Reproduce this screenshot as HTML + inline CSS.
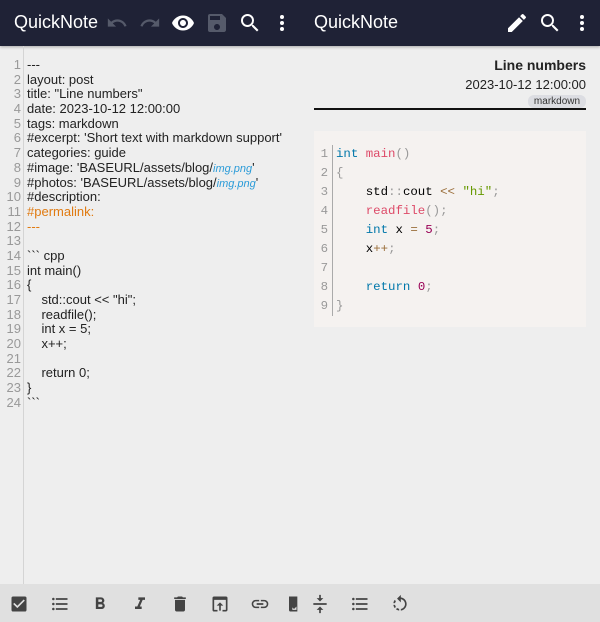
<!DOCTYPE html>
<html><head><meta charset="utf-8"><style>
*{margin:0;padding:0;box-sizing:border-box}
body{width:600px;height:622px;overflow:hidden;background:#eeeeee;font-family:"Liberation Sans",sans-serif;position:relative}
.hdr{position:absolute;left:0;top:0;width:600px;height:46px;background:#1f2236;box-shadow:0 1px 3px rgba(0,0,0,.3)}
.t{position:absolute;top:12px;color:#fff;font-size:18px}
.ic{position:absolute;top:11px}
.gut{position:absolute;left:0;top:46px;width:24px;height:538px;border-right:1px solid #d4d4d4}
.ed{position:absolute;left:0;top:58px;font-size:13px;line-height:14.7px;color:#222}
.ed div{white-space:pre;height:14.7px}
.ed span.n{display:inline-block;width:21px;text-align:right;color:#999;margin-right:6px}
.or{color:#e07b12}.bl{color:#2a9bd8;font-style:italic;font-size:11px}
.pv{position:absolute;left:314px;width:272px;text-align:right;color:#222}
.code{position:absolute;left:314px;top:131px;width:272px;height:196px;background:#f5f2f0;font-family:"Liberation Mono",monospace;font-size:12.4px}
.code div{position:absolute;left:0;white-space:pre;height:19px;line-height:19px}
.ln{display:inline-block;width:19px;text-align:right;color:#999;padding-right:4px;border-right:1px solid #aaa;margin-right:3px}
.k{color:#07a}.f{color:#dd4a68}.s{color:#690}.nu{color:#905}.p{color:#999}.o{color:#9a6e3a}
.bot{position:absolute;left:0;top:584px;width:600px;height:38px;background:#e0e0e0}
.bot svg{position:absolute;top:10px}
</style></head><body>
<div class="hdr">
<div class="t" style="left:14px">QuickNote</div>
<div class="t" style="left:314px">QuickNote</div>
<svg class="ic" style="left:106px" width="22" height="24" viewBox="0 0 24 24"><path fill="#555a6a" d="M12.5 8c-2.65 0-5.05 1-6.9 2.6L2 7v9h9l-3.62-3.62c1.39-1.16 3.16-1.88 5.12-1.88 3.54 0 6.55 2.31 7.6 5.5l2.37-.78C21.08 11.03 17.15 8 12.5 8z"/></svg>
<svg class="ic" style="left:139px" width="22" height="24" viewBox="0 0 24 24"><path fill="#555a6a" d="M18.4 10.6C16.55 9 14.15 8 11.5 8c-4.65 0-8.58 3.03-9.96 7.22L3.9 16c1.05-3.19 4.05-5.5 7.6-5.5 1.95 0 3.73.72 5.12 1.88L13 16h9V7l-3.6 3.6z"/></svg>
<svg class="ic" style="left:171px" width="24" height="24" viewBox="0 0 24 24"><path fill="#fff" d="M12 4.5C7 4.5 2.73 7.61 1 12c1.73 4.39 6 7.5 11 7.5s9.27-3.11 11-7.5c-1.73-4.39-6-7.5-11-7.5zM12 17c-2.76 0-5-2.24-5-5s2.24-5 5-5 5 2.24 5 5-2.24 5-5 5zm0-8c-1.66 0-3 1.34-3 3s1.34 3 3 3 3-1.34 3-3-1.34-3-3-3z"/></svg>
<svg class="ic" style="left:205px" width="24" height="24" viewBox="0 0 24 24"><path fill="#555a6a" d="M17 3H5a2 2 0 0 0-2 2v14a2 2 0 0 0 2 2h14c1.1 0 2-.9 2-2V7l-4-4zm-5 16c-1.66 0-3-1.34-3-3s1.34-3 3-3 3 1.34 3 3-1.34 3-3 3zm3-10H5V5h10v4z"/></svg>
<svg class="ic" style="left:238px" width="24" height="24" viewBox="0 0 24 24"><path fill="#fff" d="M15.5 14h-.79l-.28-.27A6.47 6.47 0 0 0 16 9.5 6.5 6.5 0 1 0 9.5 16c1.61 0 3.09-.59 4.23-1.57l.27.28v.79l5 4.99L20.49 19l-4.99-5zm-6 0C7.01 14 5 11.99 5 9.5S7.01 5 9.5 5 14 7.01 14 9.5 11.99 14 9.5 14z"/></svg>
<svg class="ic" style="left:270px" width="24" height="24" viewBox="0 0 24 24"><path fill="#fff" d="M12 8a2 2 0 1 0 0-4 2 2 0 0 0 0 4zm0 2a2 2 0 1 0 0 4 2 2 0 0 0 0-4zm0 6a2 2 0 1 0 0 4 2 2 0 0 0 0-4z"/></svg>
<svg class="ic" style="left:505px" width="24" height="24" viewBox="0 0 24 24"><path fill="#fff" d="M3 17.25V21h3.75L17.81 9.94l-3.75-3.75L3 17.25zM20.71 7.04a1 1 0 0 0 0-1.41l-2.34-2.34a1 1 0 0 0-1.41 0l-1.83 1.83 3.75 3.75 1.83-1.83z"/></svg>
<svg class="ic" style="left:538px" width="24" height="24" viewBox="0 0 24 24"><path fill="#fff" d="M15.5 14h-.79l-.28-.27A6.47 6.47 0 0 0 16 9.5 6.5 6.5 0 1 0 9.5 16c1.61 0 3.09-.59 4.23-1.57l.27.28v.79l5 4.99L20.49 19l-4.99-5zm-6 0C7.01 14 5 11.99 5 9.5S7.01 5 9.5 5 14 7.01 14 9.5 11.99 14 9.5 14z"/></svg>
<svg class="ic" style="left:570px" width="24" height="24" viewBox="0 0 24 24"><path fill="#fff" d="M12 8a2 2 0 1 0 0-4 2 2 0 0 0 0 4zm0 2a2 2 0 1 0 0 4 2 2 0 0 0 0-4zm0 6a2 2 0 1 0 0 4 2 2 0 0 0 0-4z"/></svg>
</div>
<div class="gut"></div>
<div class="ed">
<div><span class="n">1</span>---</div>
<div><span class="n">2</span>layout: post</div>
<div><span class="n">3</span>title: "Line numbers"</div>
<div><span class="n">4</span>date: 2023-10-12 12:00:00</div>
<div><span class="n">5</span>tags: markdown</div>
<div><span class="n">6</span>#excerpt: 'Short text with markdown support'</div>
<div><span class="n">7</span>categories: guide</div>
<div><span class="n">8</span>#image: 'BASEURL/assets/blog/<span class="bl">img.png</span>'</div>
<div><span class="n">9</span>#photos: 'BASEURL/assets/blog/<span class="bl">img.png</span>'</div>
<div><span class="n">10</span>#description:</div>
<div><span class="n">11</span><span class="or">#permalink:</span></div>
<div><span class="n">12</span><span class="or">---</span></div>
<div><span class="n">13</span></div>
<div><span class="n">14</span>&#96;&#96;&#96; cpp</div>
<div><span class="n">15</span>int main()</div>
<div><span class="n">16</span>{</div>
<div><span class="n">17</span>    std::cout &lt;&lt; "hi";</div>
<div><span class="n">18</span>    readfile();</div>
<div><span class="n">19</span>    int x = 5;</div>
<div><span class="n">20</span>    x++;</div>
<div><span class="n">21</span></div>
<div><span class="n">22</span>    return 0;</div>
<div><span class="n">23</span>}</div>
<div><span class="n">24</span>&#96;&#96;&#96;</div>
</div>
<div class="pv" style="top:57px;font-size:14px;font-weight:bold">Line numbers</div>
<div class="pv" style="top:77px;font-size:13px">2023-10-12 12:00:00</div>
<div style="position:absolute;left:528px;top:95px;width:58px;height:13px;background:#dcdde2;border-radius:6px;font-size:10px;line-height:13px;text-align:center;color:#333">markdown</div>
<div style="position:absolute;left:314px;top:108px;width:272px;height:2px;background:#111"></div>
<div class="code">
<div style="top:14px"><span class="ln">1</span><span class="k">int</span> <span class="f">main</span><span class="p">()</span></div>
<div style="top:33px"><span class="ln">2</span><span class="p">{</span></div>
<div style="top:52px"><span class="ln">3</span>    std<span class="p">::</span>cout <span class="o">&lt;&lt;</span> <span class="s">"hi"</span><span class="p">;</span></div>
<div style="top:71px"><span class="ln">4</span>    <span class="f">readfile</span><span class="p">();</span></div>
<div style="top:90px"><span class="ln">5</span>    <span class="k">int</span> x <span class="o">=</span> <span class="nu">5</span><span class="p">;</span></div>
<div style="top:109px"><span class="ln">6</span>    x<span class="o">++</span><span class="p">;</span></div>
<div style="top:128px"><span class="ln">7</span></div>
<div style="top:147px"><span class="ln">8</span>    <span class="k">return</span> <span class="nu">0</span><span class="p">;</span></div>
<div style="top:166px"><span class="ln">9</span><span class="p">}</span></div>
</div>
<div class="bot">
<svg style="left:9px" width="20" height="20" viewBox="0 0 24 24"><path fill="#444" d="M19 3H5a2 2 0 0 0-2 2v14a2 2 0 0 0 2 2h14a2 2 0 0 0 2-2V5a2 2 0 0 0-2-2zm-9 14l-5-5 1.41-1.41L10 14.17l7.59-7.59L19 8l-9 9z"/></svg>
<svg style="left:50px" width="20" height="20" viewBox="0 0 24 24"><path fill="#444" d="M4 10.5a1.5 1.5 0 1 0 0 3 1.5 1.5 0 0 0 0-3zm0-6a1.5 1.5 0 1 0 0 3 1.5 1.5 0 0 0 0-3zm0 12a1.5 1.5 0 1 0 0 3 1.5 1.5 0 0 0 0-3zM7 19h14v-2H7v2zm0-6h14v-2H7v2zm0-8v2h14V5H7z"/></svg>
<svg style="left:90px" width="20" height="20" viewBox="0 0 24 24"><path fill="#444" d="M15.6 10.79c.97-.67 1.65-1.77 1.65-2.79 0-2.26-1.75-4-4-4H7v14h7.04c2.09 0 3.71-1.7 3.71-3.790 0-1.52-.86-2.82-2.15-3.42zM10 6.5h3a1.5 1.5 0 0 1 0 3h-3v-3zm3.5 9H10v-3h3.5a1.5 1.5 0 0 1 0 3z"/></svg>
<svg style="left:130px" width="20" height="20" viewBox="0 0 24 24"><path fill="#444" d="M10 4v3h2.21l-3.42 8H6v3h8v-3h-2.21l3.42-8H18V4z"/></svg>
<svg style="left:170px" width="20" height="20" viewBox="0 0 24 24"><path fill="#444" d="M6 19c0 1.1.9 2 2 2h8c1.1 0 2-.9 2-2V7H6v12zM19 4h-3.5l-1-1h-5l-1 1H5v2h14V4z"/></svg>
<svg style="left:210px" width="20" height="20" viewBox="0 0 24 24"><path fill="#444" d="M19 3H5a2 2 0 0 0-2 2v14a2 2 0 0 0 2 2h4v-2H5V7h14v12h-4v2h4c1.1 0 2-.9 2-2V5a2 2 0 0 0-2-2zm-7 7l-4 4h3v6h2v-6h3l-4-4z"/></svg>
<svg style="left:250px" width="20" height="20" viewBox="0 0 24 24"><path fill="#444" d="M3.9 12c0-1.71 1.39-3.1 3.1-3.1h4V7H7a5 5 0 0 0 0 10h4v-1.9H7c-1.71 0-3.1-1.39-3.1-3.1zM8 13h8v-2H8v2zm9-6h-4v1.9h4c1.71 0 3.1 1.39 3.1 3.1s-1.39 3.1-3.1 3.1h-4V17h4a5 5 0 0 0 0-10z"/></svg>
<svg style="left:286px" width="16" height="20" viewBox="0 0 16 24"><path fill="#444" d="M2 3h10v18H4a2 2 0 0 1-2-2V3z"/><path fill="#e0e0e0" d="M6 16l2 2 3-3v4H6z"/></svg>
<svg style="left:310px" width="20" height="20" viewBox="0 0 24 24"><path fill="#444" d="M8 19h3v4h2v-4h3l-4-4-4 4zm8-14h-3V1h-2v4H8l4 4 4-4zM4 11v2h16v-2H4z"/></svg>
<svg style="left:350px" width="20" height="20" viewBox="0 0 24 24"><path fill="#444" d="M4 10.5a1.5 1.5 0 1 0 0 3 1.5 1.5 0 0 0 0-3zm0-6a1.5 1.5 0 1 0 0 3 1.5 1.5 0 0 0 0-3zm0 12a1.5 1.5 0 1 0 0 3 1.5 1.5 0 0 0 0-3zM7 19h14v-2H7v2zm0-6h14v-2H7v2zm0-8v2h14V5H7z"/></svg>
<svg style="left:390px" width="20" height="20" viewBox="0 0 24 24"><path fill="#444" d="M13 4.07V1L8.45 5.55 13 10V6.09c2.84.48 5 2.94 5 5.91s-2.16 5.43-5 5.91v2.02c3.95-.49 7-3.85 7-7.93s-3.05-7.44-7-7.93zM7.1 18.32c1.16.9 2.51 1.44 3.9 1.61V17.9c-.87-.15-1.71-.49-2.46-1.03L7.1 18.32zM6.09 13H4.07c.17 1.39.72 2.73 1.62 3.89l1.41-1.42c-.52-.75-.87-1.59-1.01-2.47zm1.02-4.46L5.7 7.11C4.8 8.27 4.24 9.61 4.07 11h2.02c.14-.87.49-1.72 1.02-2.46z"/></svg>
</div>
</body></html>
